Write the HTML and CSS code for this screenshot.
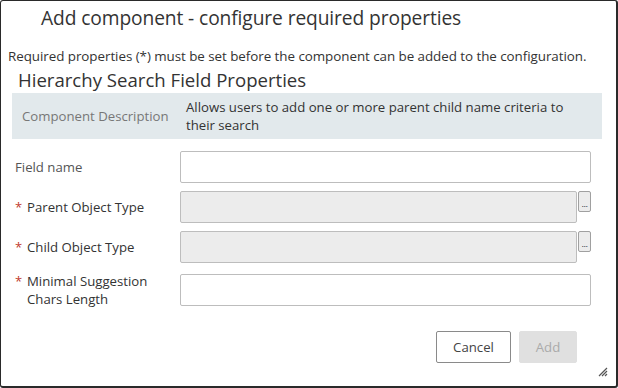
FILE: index.html
```html
<!DOCTYPE html>
<html>
<head>
<meta charset="utf-8">
<link rel="stylesheet" href="styles.css">
</head>
<body>
<div class="dialog">
  <div class="title">Add component - configure required properties</div>
  <p class="intro">Required properties (*) must be set before the component can be added to the configuration.</p>
  <h2 class="section">Hierarchy Search Field Properties</h2>
  <div class="desc">
    <div class="desc-label">Component Description</div>
    <div class="desc-text">Allows users to add one or more parent child name criteria to their search</div>
  </div>
  <div class="form">
    <div class="row">
      <label class="lbl"><span class="lbl-text">Field name</span></label>
      <div class="ctrl"><input class="inp" type="text"></div>
    </div>
    <div class="row">
      <label class="lbl"><span class="req">*</span><span class="lbl-text">Parent Object Type</span></label>
      <div class="ctrl"><input class="inp ro" type="text" readonly><button class="pick">...</button></div>
    </div>
    <div class="row">
      <label class="lbl"><span class="req">*</span><span class="lbl-text">Child Object Type</span></label>
      <div class="ctrl"><input class="inp ro" type="text" readonly><button class="pick">...</button></div>
    </div>
    <div class="row row-last">
      <label class="lbl"><span class="req">*</span><span class="lbl-text">Minimal Suggestion Chars Length</span></label>
      <div class="ctrl"><input class="inp" type="text"></div>
    </div>
  </div>
  <div class="footer">
    <button class="btn btn-cancel">Cancel</button>
    <button class="btn btn-add" disabled>Add</button>
  </div>
  <svg class="grip" width="11" height="11" viewBox="0 0 11 11">
    <path d="M10 2 L2 10 M10 5 L5 10 M10 8 L8 10" stroke="#555" stroke-width="1.2" fill="none"/>
  </svg>
</div>
</body>
</html>
```
FILE: styles.css
```css
* { box-sizing: border-box; }
html, body { margin: 0; padding: 0; background: #fff; }
body {
  font-family: "Open Sans", "Noto Sans", "Liberation Sans", sans-serif;
  color: #333;
}
.dialog {
  position: relative;
  width: 618px;
  height: 388px;
  border: 1px solid #2a2a2a;
  border-right-width: 2px;
  border-bottom-width: 2px;
  border-radius: 3px;
  display: flex;
  flex-direction: column;
}
.title {
  font-size: 19.2px;
  padding: 4px 0 0 40px;
  line-height: 26px;
  color: #333;
  letter-spacing: -0.1px;
}
.intro {
  margin: 16px 0 0 7px;
  font-size: 13.4px;
  line-height: 18px;
  color: #333;
  letter-spacing: -0.05px;
}
.section {
  margin: 3px 0 0 17px;
  font-size: 18.6px;
  font-weight: normal;
  line-height: 24px;
  color: #333;
}
.desc {
  margin: 1px 14px 0 11px;
  background: #e2e9ec;
  display: flex;
  padding: 5px 0 5px 0;
  min-height: 46px;
  font-size: 13.2px;
  line-height: 18px;
}
.desc-label {
  width: 174px;
  padding-left: 10px;
  color: #777;
  align-self: center;
}
.desc-text {
  flex: 1;
  color: #333;
  padding-right: 18px;
}
.form {
  margin-top: 12px;
  display: flex;
  flex-direction: column;
  gap: 8px;
}
.row {
  display: flex;
  align-items: center;
}
.row-last { margin-top: 1px; }
.lbl {
  width: 179px;
  padding-left: 14px;
  display: flex;
  align-items: flex-start;
  font-size: 13.2px;
  line-height: 18px;
  color: #333;
}
.lbl-text { max-width: 135px; }
.req {
  color: #c0392b;
  width: 12px;
  font-size: 13px;
}
.row:first-child .lbl { color: #555; }
.ctrl {
  display: flex;
  align-items: flex-start;
  width: 411px;
}
.inp {
  flex: 1;
  height: 32px;
  border: 1px solid #bdbdbd;
  border-radius: 2px;
  background: #fff;
  outline: none;
  margin: 0;
  padding: 0 8px;
  font: inherit;
}
.inp.ro { background: #ececec; }
.pick {
  width: 13px;
  height: 21px;
  margin: 0 0 0 1px;
  padding: 0;
  border: 1px solid #a0a0a0;
  border-radius: 2px;
  background: #ececec;
  font-family: "Liberation Sans", sans-serif;
  font-size: 9px;
  line-height: 12px;
  color: #334;
  letter-spacing: -0.5px;
  padding-top: 4px;
}
.footer {
  margin-top: auto;
  margin-bottom: 23px;
  display: flex;
  justify-content: flex-end;
  gap: 8px;
  padding-right: 39px;
}
.btn {
  height: 32px;
  font-family: inherit;
  font-size: 13.2px;
  border-radius: 2px;
  margin: 0;
}
.btn-cancel {
  width: 75px;
  background: #fff;
  border: 1px solid #8a8a8a;
  color: #444;
}
.btn-add {
  width: 58px;
  background: #e0e0e0;
  border: 1px solid #e0e0e0;
  color: #aaa;
}
.grip {
  position: absolute;
  right: 8px;
  bottom: 9px;
}
```
